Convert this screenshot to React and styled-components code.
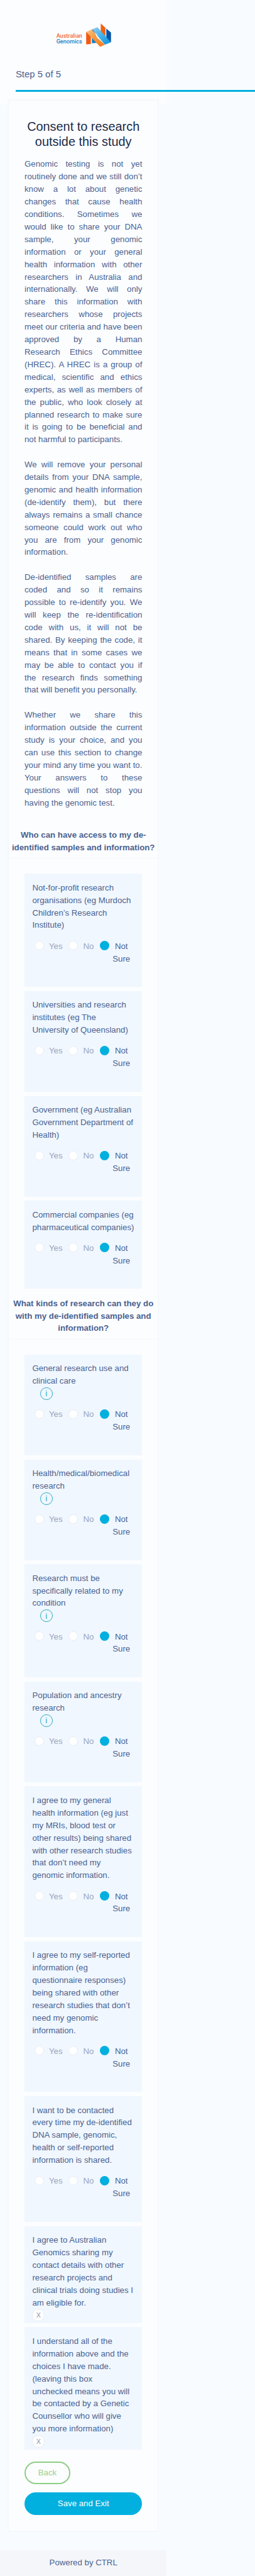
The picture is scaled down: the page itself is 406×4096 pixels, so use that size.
import React from "react";
import styled, { createGlobalStyle, css } from "styled-components";

// The page is designed on a 489px canvas and drawn at a constant scale.
const SCALE = 4096 / 4939;
const u = (n) => `${(n * SCALE).toFixed(4)}px`;

const Global = createGlobalStyle`
  * { box-sizing: border-box; }
  html, body { margin: 0; padding: 0; }
  body {
    background: #f8fbff;
    color: #4a628f;
    font-family: "Liberation Sans", Arial, sans-serif;
    font-size: ${u(16)};
    line-height: ${u(24)};
    overflow-x: hidden;
  }
`;

const Page = styled.div`
  display: flex;
  flex-direction: column;
  width: 100%;
  height: ${u(4939)};
  overflow: hidden;
`;

const Header = styled.header`
  width: ${u(320)};
  height: ${u(190)};
  flex: none;
  display: flex;
  flex-direction: column;
  background: #fcfdff;
`;

const LogoSlot = styled.div`
  height: ${u(128)};
  padding: ${u(35)} 0 0 ${u(90)};
  svg { display: block; width: ${u(140)}; height: ${u(60)}; }
`;

const Step = styled.div`
  height: ${u(44)};
  padding-left: ${u(30)};
  font-size: ${u(18)};
  line-height: ${u(27)};
  padding-top: ${u(1)};
`;

const Progress = styled.div`
  width: ${u(459)};
  height: ${u(4)};
  margin-left: ${u(30)};
  background: #02b0df;
`;

const Main = styled.main`
  width: ${u(320)};
  flex: none;
  padding: 0 ${u(15)};
  background: linear-gradient(#fcfdff ${u(10)}, transparent ${u(10)});
`;

const Panel = styled.section`
  height: ${u(4664)};
  border: 2px solid #f5f8fc;
  background: #fcfdff;
  display: flex;
  flex-direction: column;
`;

const Title = styled.h1`
  margin: ${u(37.1)} ${u(29.6)} ${u(16)};
  font-size: ${u(24)};
  line-height: ${u(28.8)};
  font-weight: 400;
  text-align: center;
  color: #1b2c48;
`;

const Prose = styled.div`
  margin: 0 ${u(29.6)};
  text-align: justify;
  p { margin: 0 0 ${u(24)}; }
`;

const Heading = styled.h2`
  margin: ${(p) => u(p.$top)} 0 ${u(28.8)};
  padding: 0 ${u(4)} ${u(8)};
  border-bottom: 1px solid #f5f7fa;
  font-size: inherit;
  line-height: inherit;
  font-weight: 700;
  text-align: center;
`;

const Cards = styled.div`
  margin: 0 ${u(29.6)};
  display: flex;
  flex-direction: column;
  gap: ${u(8)};
`;

const Card = styled.div`
  padding: ${u(15)} ${u(13)} ${(p) => u(p.$check ? 3 : 42)} ${u(15)};
  background: #f0f7ff;
`;

const CardText = styled.div`
  white-space: pre;
`;

const Info = styled.span`
  display: flex;
  align-items: center;
  justify-content: center;
  width: ${u(24)};
  height: ${u(24)};
  margin-left: ${u(15)};
  border: 1px solid #2cabbf;
  border-radius: 50%;
  color: #2cabbf;
  line-height: 1;
`;

const Options = styled.div`
  display: flex;
  gap: ${u(2)};
  margin: ${u(16)} 0 0 ${u(4)};
`;

const Option = styled.label`
  display: flex;
  color: ${(p) => (p.$on ? "#4a628f" : "#98a4bc")};
`;

const Dot = styled.span`
  flex: none;
  width: ${u(18)};
  height: ${u(18)};
  margin-top: ${u(2)};
  border-radius: 50%;
  ${(p) =>
    p.$on
      ? css`background: #02b0df;`
      : css`background: #fff; border: 1px solid #e9ecf1;`}
`;

const OptionText = styled.span`
  width: ${(p) => u(p.$w)};
  text-align: center;
`;

const Check = styled.span`
  display: flex;
  align-items: center;
  justify-content: center;
  width: ${u(24)};
  height: ${u(24)};
  border: 1px solid #e9ecf1;
  border-radius: 50%;
  background: #fff;
  color: #8593b0;
  font-size: ${u(13)};
  line-height: 1;
`;

const Button = styled.button`
  display: block;
  flex: none;
  height: ${u(44)};
  width: ${(p) => (p.$primary ? u(226) : u(88))};
  margin: ${(p) => (p.$primary ? u(15) : u(23))} 0 0 ${u(29.6)};
  padding: 0;
  border: 2px solid ${(p) => (p.$primary ? "#02b0df" : "#8fce86")};
  border-radius: ${u(22)};
  background: ${(p) => (p.$primary ? "#02b0df" : "transparent")};
  color: ${(p) => (p.$primary ? "#fff" : "#97d28f")};
  font: inherit;
`;

const Footer = styled.footer`
  width: ${u(320)};
  height: ${u(50)};
  flex: none;
  margin-top: ${u(35)};
  padding-top: ${u(12.5)};
  background: #f5f6fa;
  text-align: center;
`;

const Logo = () => (
  <svg viewBox="0 0 420 180" role="img" aria-label="Australian Genomics">
    <defs>
      <linearGradient id="ob" x1="0" y1="0" x2="1" y2="1">
        <stop offset="0" stopColor="#fbc48a" />
        <stop offset="0.5" stopColor="#f7963a" />
        <stop offset="1" stopColor="#f47b20" />
      </linearGradient>
      <linearGradient id="bb" x1="0" y1="0" x2="1" y2="1">
        <stop offset="0" stopColor="#8fd0f5" />
        <stop offset="0.5" stopColor="#45b0ea" />
        <stop offset="1" stopColor="#0a94dc" />
      </linearGradient>
    </defs>
    <g fontFamily="Roboto, sans-serif" fontSize="35" fontWeight="500">
      <text x="53" y="113" fill="#f4673a" textLength="149" lengthAdjust="spacingAndGlyphs">Australian</text>
      <text x="53" y="146" fill="#2380c3" textLength="149" lengthAdjust="spacingAndGlyphs">Genomics</text>
    </g>
    <path d="M225 79 L252 100 L252 148 L225 150 Z" fill="#f25a12" />
    <path d="M258 92 L300 140 L258 144 Z" fill="#0a7cc4" />
    <path d="M309 30 L336 55 L336 125 L309 100 Z" fill="#f2600f" />
    <path d="M341 60 L368 82 L368 138 L341 120 Z" fill="#0653a6" />
    <path d="M258 64 L290 52 L368 138 L333 152 Z" fill="url(#bb)" />
    <path d="M225 79 L258 64 L278 88 L288 112 L333 152 L305 165 Z" fill="url(#ob)" />
    <path d="M276 84 L288 95 L289 112 Z" fill="#fff" />
    <path d="M258 64 L264 67 L280 92 L277 88 Z" fill="#0b4f9c" />
  </svg>
);

const Question = ({ text, info }) => (
  <Card>
    <CardText>{text}</CardText>
    {info && <Info>i</Info>}
    <Options>
      <Option><Dot /><OptionText $w={46}>Yes</OptionText></Option>
      <Option><Dot /><OptionText $w={40}>No</OptionText></Option>
      <Option $on><Dot $on /><OptionText $w={46}>Not Sure</OptionText></Option>
    </Options>
  </Card>
);

const Agreement = ({ text }) => (
  <Card $check>
    <CardText>{text}</CardText>
    <Check>X</Check>
  </Card>
);

const paragraphs = [
  "Genomic testing is not yet routinely done and we still don’t know a lot about genetic changes that cause health conditions. Sometimes we would like to share your DNA sample, your genomic information or your general health information with other researchers in Australia and internationally. We will only share this information with researchers whose projects meet our criteria and have been approved by a Human Research Ethics Committee (HREC). A HREC is a group of medical, scientific and ethics experts, as well as members of the public, who look closely at planned research to make sure it is going to be beneficial and not harmful to participants.",
  "We will remove your personal details from your DNA sample, genomic and health information (de-identify them), but there always remains a small chance someone could work out who you are from your genomic information.",
  "De-identified samples are coded and so it remains possible to re-identify you. We will keep the re-identification code with us, it will not be shared. By keeping the code, it means that in some cases we may be able to contact you if the research finds something that will benefit you personally.",
  "Whether we share this information outside the current study is your choice, and you can use this section to change your mind any time you want to. Your answers to these questions will not stop you having the genomic test.",
];

const access = [
  "Not-for-profit research\norganisations (eg Murdoch\nChildren’s Research\nInstitute)",
  "Universities and research\ninstitutes (eg The\nUniversity of Queensland)",
  "Government (eg Australian\nGovernment Department of\nHealth)",
  "Commercial companies (eg\npharmaceutical companies)",
];

const kinds = [
  { text: "General research use and\nclinical care", info: true },
  { text: "Health/medical/biomedical\nresearch", info: true },
  { text: "Research must be\nspecifically related to my\ncondition", info: true },
  { text: "Population and ancestry\nresearch", info: true },
  { text: "I agree to my general\nhealth information (eg just\nmy MRIs, blood test or\nother results) being shared\nwith other research studies\nthat don’t need my\ngenomic information." },
  { text: "I agree to my self-reported\ninformation (eg\nquestionnaire responses)\nbeing shared with other\nresearch studies that don’t\nneed my genomic\ninformation." },
  { text: "I want to be contacted\nevery time my de-identified\nDNA sample, genomic,\nhealth or self-reported\ninformation is shared." },
];

const agreements = [
  "I agree to Australian\nGenomics sharing my\ncontact details with other\nresearch projects and\nclinical trials doing studies I\nam eligible for.",
  "I understand all of the\ninformation above and the\nchoices I have made.\n(leaving this box\nunchecked means you will\nbe contacted by a Genetic\nCounsellor who will give\nyou more information)",
];

export default function App() {
  return (
    <Page>
      <Global />
      <Header>
        <LogoSlot><Logo /></LogoSlot>
        <Step>Step 5 of 5</Step>
        <Progress />
      </Header>
      <Main>
        <Panel>
          <Title>Consent to research outside this study</Title>
          <Prose>{paragraphs.map((p) => <p key={p}>{p}</p>)}</Prose>
          <Heading $top={14}>Who can have access to my de-identified samples and information?</Heading>
          <Cards>{access.map((t) => <Question key={t} text={t} />)}</Cards>
          <Heading $top={16}>What kinds of research can they do with my de-identified samples and information?</Heading>
          <Cards>
            {kinds.map((k) => <Question key={k.text} {...k} />)}
            {agreements.map((t) => <Agreement key={t} text={t} />)}
          </Cards>
          <Button>Back</Button>
          <Button $primary>Save and Exit</Button>
        </Panel>
      </Main>
      <Footer>Powered by CTRL</Footer>
    </Page>
  );
}
